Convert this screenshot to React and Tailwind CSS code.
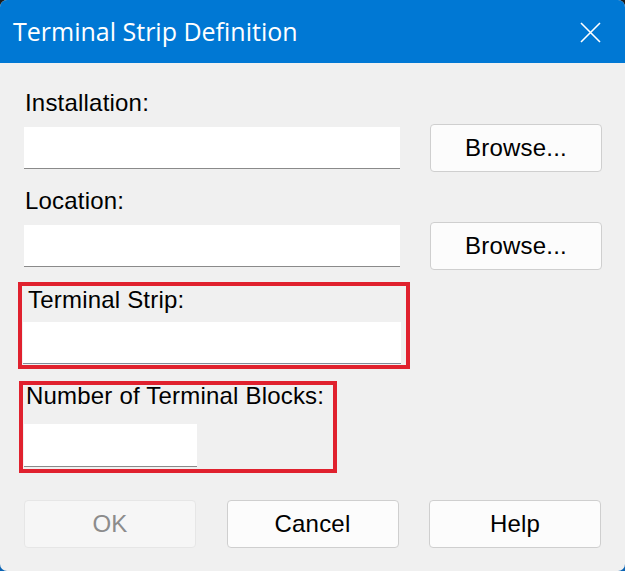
import React from "react";

function Btn({ children, disabled }) {
  return (
    <div
      className={
        "flex h-[48px] w-[172px] items-center justify-center rounded-[4px] border text-[24px] leading-none " +
        (disabled
          ? "border-[#e6e6e6] bg-[#f6f6f6] text-[#8c8c8c]"
          : "border-[#cfcfcf] bg-[#fcfcfc] text-black")
      }
    >
      {children}
    </div>
  );
}

export default function App() {
  return (
    <div className="h-[571px] w-[625px] bg-[linear-gradient(to_bottom,#1c1c1c_50%,#0a63b3_50%)] font-['Liberation_Sans',Arial,sans-serif]">
      <div className="flex h-full w-full flex-col overflow-hidden rounded-[7px] bg-[#f0f0f0]">
        <div className="flex h-[63px] shrink-0 items-center justify-between bg-[#0078d4] pl-[13px] pr-[24px]">
          <span className="font-['Open_Sans',sans-serif] text-[25px] leading-none text-white">
            Terminal Strip Definition
          </span>
          <svg width="21" height="21" viewBox="0 0 21 21" className="mt-[1px]">
            <path d="M1 1 L20 20 M20 1 L1 20" stroke="white" strokeWidth="1.6" fill="none" />
          </svg>
        </div>

        <div className="flex flex-col px-[24px] tracking-[0.2px]">
          <div className="mt-[27px] pl-[1px] text-[24px] leading-[26px] text-black">Installation:</div>
          <div className="mt-[7px] flex h-[49px] items-center justify-between">
            <div className="h-[42px] w-[376px] border-b border-[#8a8a8a] bg-white" />
            <div className="mr-[-1px]">
              <Btn>Browse...</Btn>
            </div>
          </div>

          <div className="mt-[16px] pl-[1px] text-[24px] leading-[26px] text-black">Location:</div>
          <div className="mt-[7px] flex h-[49px] items-center justify-between">
            <div className="h-[42px] w-[376px] border-b border-[#8a8a8a] bg-white" />
            <div className="mr-[-1px]">
              <Btn>Browse...</Btn>
            </div>
          </div>

          <div className="ml-[-6px] mt-[12px] w-[392px] border-4 border-[#e0212e] pb-[1px] pl-[1px]">
            <div className="mt-[4px] pl-[5px] text-[24px] leading-[20px] text-black">Terminal Strip:</div>
            <div className="mt-[12px] h-[42px] w-[378px] border-b border-[#7f8a99] bg-white" />
          </div>

          <div className="ml-[-5px] mt-[12px] w-[318px] border-4 border-[#e0212e] pb-[2px] pl-[1px]">
            <div className="mt-[1px] pl-[2px] text-[24px] leading-[20px] text-black">Number of Terminal Blocks:</div>
            <div className="mt-[18px] h-[43px] w-[173px] border-b border-[#8a8a8a] bg-white" />
          </div>

          <div className="mt-[27px] flex items-center justify-between">
            <Btn disabled>OK</Btn>
            <Btn>Cancel</Btn>
            <Btn>Help</Btn>
          </div>
        </div>
      </div>
    </div>
  );
}
